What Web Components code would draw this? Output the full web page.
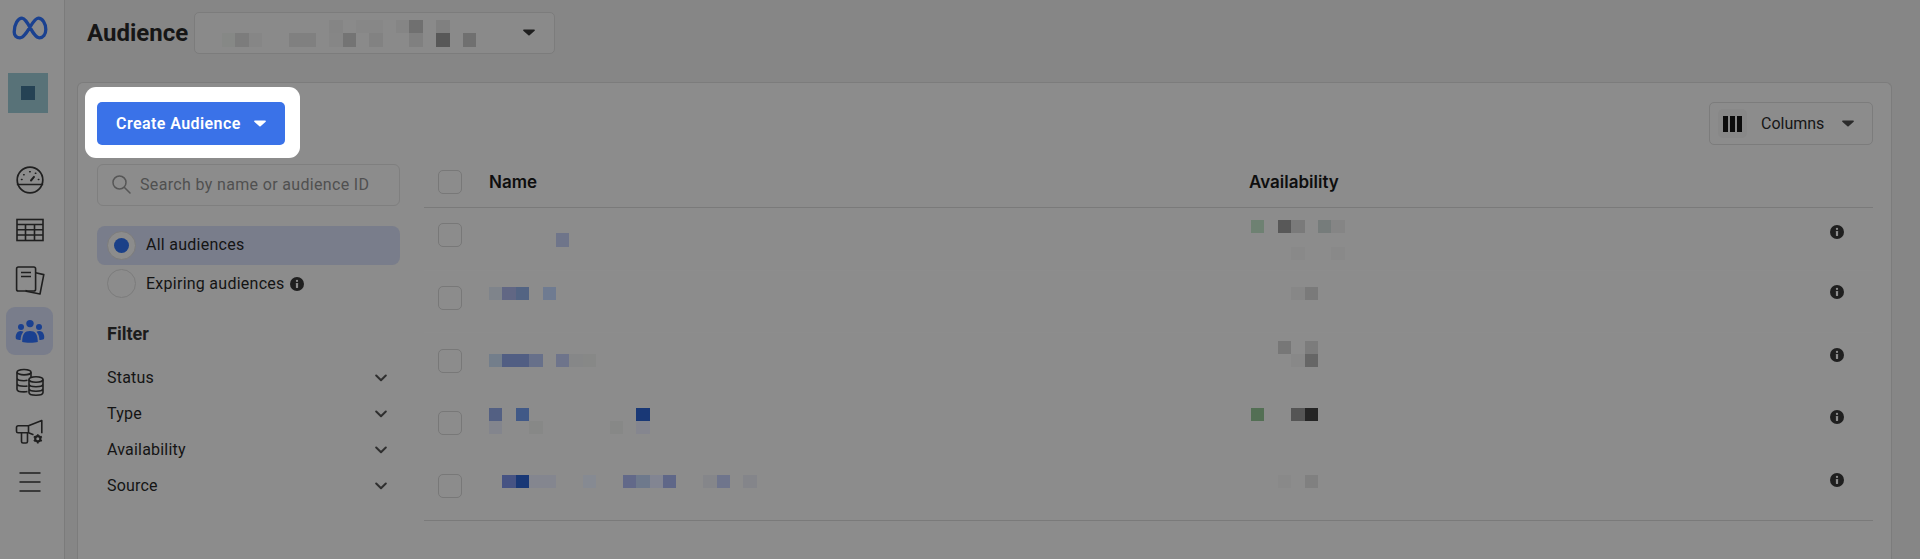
<!DOCTYPE html>
<html lang="en"><head><meta charset="utf-8"><title>Audience</title>
<style>
html,body{margin:0;height:559px;overflow:hidden;background:#868686}
body{font-family:Roboto,"Liberation Sans",sans-serif;color:#141414}
</style></head>
<body>
<audience-app></audience-app>
<template id="t-app">
<style>
:host{display:flex;height:559px;width:1920px;overflow:hidden}
main{flex:1;min-width:0;display:flex;flex-direction:column}
</style>
<side-bar></side-bar>
<main>
  <page-header></page-header>
  <audience-card></audience-card>
</main>
</template>
<script>
const ICONS={
gauge:`<svg width="30" height="30" viewBox="0 0 30 30" fill="none" stroke="#1f1f1f" stroke-width="1.7" stroke-linecap="round"><circle cx="15" cy="15" r="12.8"/><path d="M2.6 19.5h24.8"/><path d="M16 15.5l3-3.6" stroke-width="2"/><path d="M6.5 14.5h.5M8.7 9.7h.4M14.7 6.8h.5M20.4 8.2h.4M23.4 14.5h.4" stroke-width="1.6"/></svg>`,
table:`<svg width="30" height="26" viewBox="0 0 30 26" fill="none" stroke="#1f1f1f" stroke-width="1.6"><rect x="2" y="2.5" width="26" height="21"/><path d="M2 7.5h26M2 12.7h26M2 18h26M10.5 7.5v16M19.5 7.5v16"/></svg>`,
pages:`<svg width="30" height="30" viewBox="0 0 30 30" fill="none" stroke="#1f1f1f" stroke-width="1.6" stroke-linejoin="round"><rect x="1.6" y="1" width="19" height="24" rx="1.8"/><path d="M6 6.5h10M6 10.5h10"/><path d="M20.6 6.8l8.2 1.8-3.8 19.4-13.800-2.800.3-1.200"/></svg>`,
people:`<svg width="30" height="24" viewBox="0 0 30 24" fill="#1a4090"><circle cx="15" cy="4.6" r="3.7"/><circle cx="6" cy="8" r="3"/><circle cx="24" cy="8" r="3"/><path d="M7.2 23c0-8 2.6-11 7.8-11s7.800 3 7.800 11c-3 .9-12.600.9-15.600 0z"/><path d="M1 20c-1-3.600.8-8 4.600-8 1.200 0 2 .3 2.800.8-1.800 2-2.700 4.700-2.800 8.200-1.600-.1-3.400-.4-4.600-1zM29 20c1-3.600-.8-8-4.600-8-1.200 0-2 .3-2.800.8 1.800 2 2.700 4.700 2.800 8.200 1.600-.1 3.400-.4 4.600-1z"/></svg>`,
db:`<svg width="30" height="28" viewBox="0 0 30 28" fill="none" stroke="#1f1f1f" stroke-width="1.600"><ellipse cx="9" cy="4.200" rx="7" ry="2.700"/><path d="M2 4.200v17c0 1.500 3 2.700 7 2.700 1.300 0 2.500-.1 3.500-.4M2 10c0 1.500 3 2.700 7 2.700 1.300 0 2.500-.1 3.500-.4M2 15.600c0 1.500 3 2.700 7 2.700 1.300 0 2.500-.1 3.500-.4M16 4.200v5.200"/><ellipse cx="21" cy="11.500" rx="7" ry="2.700"/><path d="M14 11.500v13c0 1.500 3 2.700 7 2.700s7-1.200 7-2.700v-13M14 16c0 1.500 3 2.700 7 2.700s7-1.200 7-2.700M14 20.500c0 1.500 3 2.700 7 2.700s7-1.200 7-2.700"/></svg>`,
mega:`<svg width="30" height="26" viewBox="0 0 30 26" fill="none" stroke="#1f1f1f" stroke-width="1.600" stroke-linejoin="round"><path d="M1.500 8.500c0-1 .8-1.800 1.800-1.800h10.200L26.800 1.500v12.800M13.500 6.700v7M1.500 8.500v3.800c0 .8.700 1.400 1.500 1.400h10.500l5 2"/><path d="M6.500 13.700v8.800c0 .9.700 1.500 1.500 1.500h3c.8 0 1.500-.6 1.500-1.500v-8.800"/><g transform="translate(22.800 19.800)"><circle r="2.600" stroke-width="2.200"/><path d="M0-4.600v1.400M0 3.200v1.400M-4-2.300l1.200.7M2.800 1.600l1.200.7M-4 2.300l1.200-.7M2.800-1.600l1.200-.7" stroke-width="1.700"/></g></svg>`,
menu:`<svg width="22" height="20" viewBox="0 0 22 20" fill="none" stroke="#1f1f1f" stroke-width="1.500"><path d="M.5 1h21M.5 10h21M.5 19h21"/></svg>`
};
const svgInfo=s=>`<svg width="${s}" height="${s}" viewBox="0 0 14 14" style="display:block"><circle cx="7" cy="7" r="7" fill="#1f1f1f"/><circle cx="7" cy="3.900" r="1.150" fill="#8c8c8c"/><rect x="5.900" y="6" width="2.200" height="5" rx=".4" fill="#8c8c8c"/></svg>`;
const caret=(c,w=12,h=7)=>`<svg width="${w}" height="${h}" viewBox="0 0 12 7" style="display:block"><path d="M.8.6h10.400c.6 0 .9.700.5 1.100L6.600 6.300c-.3.300-.9.300-1.200 0L.3 1.700C-.1 1.300.2.600.8.600z" fill="${c}"/></svg>`;

class Base extends HTMLElement{
  shadow(html){const r=this.attachShadow({mode:'open'});r.innerHTML=html;return r}
}
class AudienceApp extends HTMLElement{constructor(){super();this.attachShadow({mode:'open'}).appendChild(document.getElementById('t-app').content.cloneNode(true))}}

class NavItem extends Base{constructor(){super();const n=this.getAttribute('icon');this.shadow(`<style>:host{display:flex;align-items:center;justify-content:center;width:47px;height:48px;border-radius:9px}:host([active]){background:#797d8b}svg{display:block}</style>${ICONS[n]}`)}}
class SideBar extends Base{constructor(){super();this.shadow(`<style>
:host{display:flex;flex-direction:column;align-items:flex-start;width:64px;flex:none;height:559px;background:#8c8c8c;border-right:1px solid #7b7b7b;box-sizing:content-box}
.logo{margin:16px 0 0 12px;display:block}
.acct{margin:33px 0 0 8px;width:40px;height:40px;background:#587278;display:flex;align-items:center;justify-content:center}
.acct i{display:block;width:14px;height:14px;background:#254254}
nav{margin:43px 0 0 6px;display:flex;flex-direction:column;gap:2.400px}
</style>
<svg class="logo" width="36" height="24" viewBox="0 0 36 24" fill="none" stroke="#1a4190" stroke-width="3.300" stroke-linecap="round" stroke-linejoin="round"><path d="M2.200 16C2.200 8 6 2.200 10 2.200c5.500 0 11 19.600 17.200 19.600 4 0 6.600-3.500 6.600-8.300 0-6-3.300-11.300-7.600-11.300C20.500 2.200 14.500 21.800 8 21.800c-3.500 0-5.800-2.300-5.800-5.800z"/></svg>
<div class="acct"><i></i></div>
<nav>
<nav-item icon="gauge"></nav-item><nav-item icon="table"></nav-item><nav-item icon="pages"></nav-item><nav-item icon="people" active></nav-item><nav-item icon="db"></nav-item><nav-item icon="mega"></nav-item><nav-item icon="menu"></nav-item>
</nav>`)}}

class PixelMosaic extends Base{constructor(){super();
  const cells=(this.getAttribute('cells')||'').split(';').filter(Boolean).map(c=>{const [r,k,col]=c.split(',');return `<span style="grid-row:${+r+1};grid-column:${+k+1};background:${col}"></span>`}).join('');
  this.shadow(`<style>:host{display:block}div{display:grid;grid-template-columns:repeat(22,13.400px);grid-auto-rows:13.400px}</style><div>${cells}</div>`)}}

class PageHeader extends Base{constructor(){super();this.shadow(`<style>
:host{display:flex;align-items:flex-start;height:82px;box-sizing:border-box;padding:12px 0 0 22px;gap:6px}
h1{margin:0;font:700 24px/42px Roboto,sans-serif;color:#161616;width:101px;white-space:nowrap}
.sel{width:361px;height:42px;box-sizing:border-box;border:1px solid #7c7c7c;border-radius:5px;background:#8a8a8a;display:flex;align-items:flex-start;padding:7px 0 0 27px;position:relative;overflow:hidden}
.car{position:absolute;right:19px;top:16px}
</style>
<h1>Audience</h1>
<div class="sel"><pixel-mosaic cells="0,8,#858585;0,10,#878787;0,11,#878787;0,13,#858585;0,14,#707070;0,16,#808080;1,0,#868886;1,1,#7c7c7c;1,2,#868686;1,5,#808080;1,6,#808080;1,8,#868686;1,9,#747474;1,11,#828282;1,14,#808080;1,16,#585858;1,18,#707070"></pixel-mosaic><span class="car">${caret('#1f1f1f')}</span></div>`)}}

class PrimaryButton extends Base{constructor(){super();this.shadow(`<style>
:host{display:block;background:#fff;border-radius:11px;padding:15px 15px 13px 12px;margin:-15px 0 -13px -12px}
.b{display:flex;align-items:center;width:188px;height:43px;box-sizing:border-box;padding:0 0 0 19px;background:#3a72e8;border-radius:5px;color:#fff;font:600 16px/20px Roboto,sans-serif;letter-spacing:.42px;white-space:nowrap}
.c{margin-left:13px}
</style><div class="b"><slot></slot><span class="c">${caret('#fff',12,7)}</span></div>`)}}

class ColumnsButton extends Base{constructor(){super();this.shadow(`<style>
:host{display:flex;align-items:center;width:164px;height:43px;box-sizing:border-box;border:1px solid #7c7c7c;border-radius:5px;background:#8c8c8c;padding-left:8px;font:400 16px/20px Roboto,sans-serif;color:#161616}
.ic{width:29px;height:29px;border-radius:5px;background:#888;display:flex;align-items:center;justify-content:center;gap:1.500px}
.ic i{display:block;width:5.500px;height:16px;background:#0c0c0c}
.t{margin-left:14px}
.c{margin-left:18px}
</style><span class="ic"><i></i><i></i><i></i></span><span class="t"><slot></slot></span><span class="c">${caret('#2b2b2b',12,7)}</span>`)}}

class SearchBox extends Base{constructor(){super();this.shadow(`<style>
:host{display:flex;align-items:center;height:42px;box-sizing:border-box;border:1px solid #7f7f7f;border-radius:6px;padding-left:14px;font:400 16px/20px Roboto,sans-serif;color:#505050;letter-spacing:.34px;white-space:nowrap}
svg{display:block;margin-right:8px}
</style><svg width="20" height="20" viewBox="0 0 20 20" fill="none" stroke="#565656" stroke-width="1.500" stroke-linecap="round"><circle cx="7.500" cy="7.500" r="6.500"/><path d="M12.500 12.500l5.500 5.500"/></svg><slot></slot>`)}}

class RadioRow extends Base{constructor(){super();this.shadow(`<style>
:host{display:flex;align-items:center;height:38.500px;padding-left:10px;border-radius:8px;font:400 16px/20px Roboto,sans-serif;letter-spacing:.26px;color:#141414;white-space:nowrap}
:host([checked]){background:#797d8b}
.r{width:29px;height:29px;box-sizing:border-box;border:1px solid #7c7c7c;border-radius:50%;background:#8c8c8c;display:flex;align-items:center;justify-content:center;margin-right:10px}
.r i{display:none;width:15px;height:15px;border-radius:50%;background:#1b4088}
:host([checked]) .r i{display:block}
.x{display:flex;margin-left:5px}
</style><span class="r"><i></i></span><slot></slot>${this.hasAttribute('info')?`<span class="x">${svgInfo(14)}</span>`:''}`)}}

class FilterRow extends Base{constructor(){super();this.shadow(`<style>
:host{display:flex;align-items:center;justify-content:space-between;height:36px;padding:0 13px 0 10px;font:400 16px/20px Roboto,sans-serif;letter-spacing:.2px;color:#141414}
svg{display:block}
</style><slot></slot><svg width="12" height="8" viewBox="0 0 12 8" fill="none" stroke="#2f2f2f" stroke-width="2" stroke-linecap="round" stroke-linejoin="round"><path d="M1.200 1.500L6 6.200l4.800-4.700"/></svg>`)}}

class TableRow extends Base{constructor(){super();const g=a=>this.getAttribute(a);this.shadow(`<style>
:host{display:grid;grid-template-columns:65px 762px 1fr 14px 29px;box-sizing:border-box;height:${g('h')}px;align-items:start;border-bottom:1px solid ${g('line')||'transparent'}}
.cb{margin:${g('cb')}px 0 0 14px;width:24px;height:24px;box-sizing:border-box;border:1px solid #787878;border-radius:5px;background:#8c8c8c}
.m{padding-top:${g('m')}px}
.i{padding-top:${g('i')}px}
</style><div class="cb"></div><div class="m"><pixel-mosaic cells="${g('name')}"></pixel-mosaic></div><div class="m"><pixel-mosaic cells="${g('avail')}"></pixel-mosaic></div><div class="i">${svgInfo(14)}</div><div></div>`)}}

class TableHead extends Base{constructor(){super();this.shadow(`<style>
:host{display:grid;grid-template-columns:65px 760px 1fr;box-sizing:border-box;height:44px;padding-bottom:8px;align-items:center;border-bottom:1px solid #7a7a7a;font:600 17px/20px Inter,Roboto,sans-serif;color:#0e0e0e}
.cb{margin-left:14px;width:24px;height:24px;box-sizing:border-box;border:1px solid #787878;border-radius:5px;background:#8c8c8c}
</style><div class="cb"></div><div>Name</div><div>Availability</div>`)}}

class AudienceCard extends Base{constructor(){super();this.shadow(`<style>
:host{display:flex;flex-direction:column;flex:1;margin:0 28px 0 12px;box-sizing:border-box;background:#8c8c8c;border:1px solid #7c7c7c;border-bottom:0;border-radius:6px 6px 0 0;padding:19px 18px 0 19px}
.top{display:flex;justify-content:space-between;align-items:flex-start;height:43px}
.body{display:flex;gap:24px;margin-top:19px}
.left{width:303px;flex:none}
.radios{margin-top:20px}
h2{margin:0;padding:19px 0 0 10px;font:700 18px/24px Roboto,sans-serif;color:#1c1c1c;height:61px;box-sizing:border-box}
.f{margin-top:-4px}
.tbl{flex:1;min-width:0}
</style>
<div class="top"><primary-button>Create Audience</primary-button><columns-button>Columns</columns-button></div>
<div class="body">
 <div class="left">
  <search-box>Search by name or audience ID</search-box>
  <div class="radios"><radio-row checked>All audiences</radio-row><radio-row info>Expiring audiences</radio-row></div>
  <h2>Filter</h2>
  <div class="f"><filter-row>Status</filter-row><filter-row>Type</filter-row><filter-row>Availability</filter-row><filter-row>Source</filter-row></div>
 </div>
 <div class="tbl">
  <table-head></table-head>
  <table-row h="63" cb="15" m="12" i="17" line="#8d8d8d" name="1,5,#6f758a" avail="0,0,#6e8172;0,2,#585858;0,3,#7a7a7a;0,5,#767c7b;0,6,#858585;2,3,#898989;2,6,#898989"></table-row>
  <table-row h="62" cb="15" m="16" i="14" line="#8d8d8d" name="0,0,#7f848b;0,1,#616784;0,2,#536483;0,4,#6f7b91" avail="0,3,#878787;0,4,#7a7a7a"></table-row>
  <table-row h="63" cb="16" m="7.600" i="15" name="1,0,#737e8b;1,1,#515e83;1,2,#515e83;1,3,#67708a;1,5,#6e748b;1,6,#868788;1,7,#878887" avail="0,2,#777777;0,4,#7c7c7c;1,3,#888888;1,4,#666666"></table-row>
  <table-row h="62" cb="15" m="11.600" i="14" name="0,0,#536083;0,2,#415987;0,11,#193876;1,0,#83858d;1,3,#878887;1,9,#878887;1,11,#85868f" avail="0,0,#536f54;0,3,#555555;0,4,#252525"></table-row>
  <table-row h="63" cb="16" m="16.600" i="15" line="#7a7a7a" name="0,1,#465383;0,2,#193876;0,3,#84868f;0,4,#84868f;0,7,#868a92;0,10,#626989;0,11,#6e798c;0,12,#828592;0,13,#5f6788;0,16,#85868a;0,17,#6f758c;0,19,#84858a" avail="0,2,#898989;0,4,#808080"></table-row>
 </div>
</div>`)}}

[['nav-item',NavItem],['side-bar',SideBar],['pixel-mosaic',PixelMosaic],['page-header',PageHeader],['primary-button',PrimaryButton],['columns-button',ColumnsButton],['search-box',SearchBox],['radio-row',RadioRow],['filter-row',FilterRow],['table-row',TableRow],['table-head',TableHead],['audience-card',AudienceCard],['audience-app',AudienceApp]].forEach(([n,c])=>customElements.define(n,c));
</script>
</body></html>
